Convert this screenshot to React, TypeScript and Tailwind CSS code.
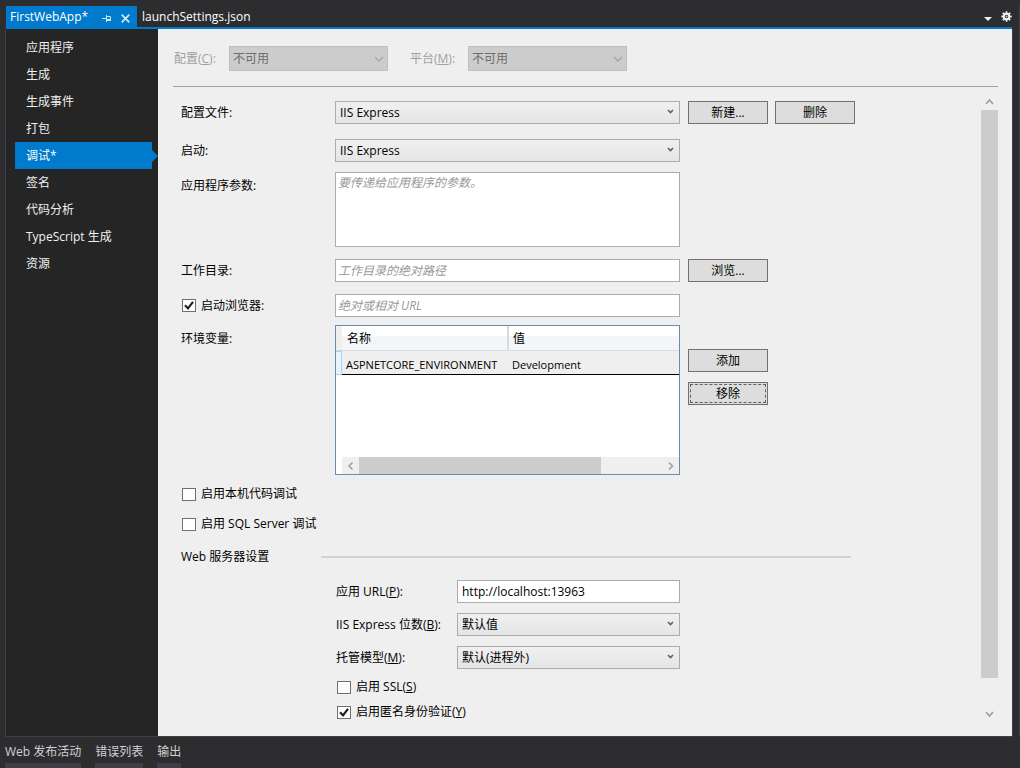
import { useId, useState } from "react";
import type { ReactNode } from "react";

const pages = ["应用程序", "生成", "生成事件", "打包", "调试*", "签名", "代码分析", "TypeScript 生成", "资源"];
const panels = ["Web 发布活动", "错误列表", "输出"];
const teeth = [0, 45, 90, 135, 180, 225, 270, 315];

function Chevron({ className, d, w = 2 }: { className: string; d: string; w?: number }) {
  return (
    <svg className={className} viewBox="0 0 10 10" fill="none" stroke="currentColor" strokeWidth={w} aria-hidden="true">
      <path d={d} />
    </svg>
  );
}

function Combo({ id, value, disabled = false }: { id: string; value: string; disabled?: boolean }) {
  return (
    <div className="relative min-w-0 flex-1">
      <select
        id={id}
        disabled={disabled}
        defaultValue={value}
        className={
          disabled
            ? "block h-[25px] w-full appearance-none border border-[#bfbfbf] bg-[#cccccc] px-[3px] text-[#6d6d6d] opacity-100"
            : "block h-[23px] w-full appearance-none border border-[#acacac] bg-linear-to-b from-[#f0f0f0] to-[#e5e5e5] px-1 text-black"
        }
      >
        <option>{value}</option>
      </select>
      {disabled ? (
        <Chevron className="pointer-events-none absolute top-2 right-1 h-[10px] w-[10px] text-[#a5a5a5]" d="M1 3l4 4 4-4" w={1.3} />
      ) : (
        <Chevron className="pointer-events-none absolute top-[5px] right-1 h-[10px] w-[10px] text-[#606060]" d="M2 4l2.5 2.5L7 4" w={1.6} />
      )}
    </div>
  );
}

function Check({ checked = false, children }: { checked?: boolean; children: ReactNode }) {
  const id = useId();
  return (
    <div className="flex items-center gap-[5px] pl-px">
      <span className="relative flex">
        <input
          id={id}
          type="checkbox"
          defaultChecked={checked}
          className="peer h-[13px] w-[14px] appearance-none border border-[#707070] bg-white"
        />
        <svg
          className="pointer-events-none absolute inset-0 hidden h-[13px] w-[14px] text-[#212121] peer-checked:block"
          viewBox="0 0 14 13"
          fill="none"
          stroke="currentColor"
          strokeWidth="2.2"
          aria-hidden="true"
        >
          <path d="M3 6.2l3 3.2 5-6.6" />
        </svg>
      </span>
      <label htmlFor={id}>{children}</label>
    </div>
  );
}

function Push({ children, focused = false }: { children: ReactNode; focused?: boolean }) {
  return (
    <button type="button" className="flex h-[23px] w-20 border border-[#707070] bg-[#dddddd] p-px text-black">
      <span
        className={
          focused
            ? "flex flex-1 items-center justify-center self-stretch border border-dashed border-[#606060]"
            : "flex flex-1 items-center justify-center self-stretch"
        }
      >
        {children}
      </span>
    </button>
  );
}

const box = "block w-full border border-[#acacac] bg-white text-black placeholder:text-[#999999] placeholder:italic";

export default function App() {
  const [page, setPage] = useState("调试*");
  return (
    <div className="flex min-h-screen flex-col bg-[#2d2d30] pt-[6px] font-['Open_Sans','Noto_Sans_CJK_SC',sans-serif] text-xs leading-4 text-black">
      <div className="flex flex-1 flex-col border-r border-[#3f3f46] pr-[6px] pl-[5px]">
        <header className="flex h-[21px] items-center pl-px text-white">
          <div className="flex h-full w-[131px] items-center bg-[#007acc] pl-1">
            <a href="#app" className="flex-1 whitespace-nowrap">FirstWebApp*</a>
            <button type="button" aria-label="固定" className="mt-1 mr-[10px]">
              <svg className="h-[9px] w-[9px]" viewBox="0 0 9 9" fill="none" stroke="#d0e6f5" aria-hidden="true">
                <path d="M0 4.5h4M4.5 1v7M4.5 2.5h4V6" />
                <path d="M4 6h5" strokeWidth="2" />
              </svg>
            </button>
            <button type="button" aria-label="关闭" className="mt-1 mr-[7px]">
              <svg className="h-[9px] w-[9px]" viewBox="0 0 9 9" fill="none" stroke="#d0e6f5" strokeWidth="1.7" aria-hidden="true">
                <path d="M0.7 0.7l7.6 7.6M8.3 0.7L0.7 8.3" />
              </svg>
            </button>
          </div>
          <a href="#launch" className="flex-1 pl-[5px]">launchSettings.json</a>
          <button type="button" aria-label="窗口列表" className="mt-1 mr-[9px]">
            <svg className="h-1 w-2" viewBox="0 0 8 4" fill="#f1f1f1" aria-hidden="true">
              <path d="M0 0h8L4 4z" />
            </svg>
          </button>
          <button type="button" aria-label="选项" className="mr-px">
            <svg className="h-[11px] w-[11px]" viewBox="0 0 11 11" fill="none" stroke="#f1f1f1" aria-hidden="true">
              <circle cx="5.5" cy="5.5" r="2.8" strokeWidth="2" />
              <circle cx="5.5" cy="5.5" r="0.6" strokeWidth="0.8" />
              {teeth.map((a) => (
                <path key={a} d="M5.5 0.3v2" strokeWidth="1.8" transform={`rotate(${a} 5.5 5.5)`} />
              ))}
            </svg>
          </button>
        </header>

        <div className="mx-px h-[2px] bg-[#007acc]" />

        <div className="flex flex-1 border border-t-0 border-[#3f3f46]">
          <nav className="flex w-[152px] shrink-0 flex-col bg-[#252526] pt-[5px] pl-[9px] text-[#f1f1f1]">
            {pages.map((p) => (
              <button
                key={p}
                type="button"
                onClick={() => setPage(p)}
                className="flex h-[27px] items-center text-left"
              >
                <span className={p === page ? "flex h-full flex-1 items-center bg-[#007acc] pl-[11px] text-white" : "flex-1 pl-[11px]"}>
                  {p}
                </span>
                <svg className="h-3 w-[6px]" viewBox="0 0 6 12" fill={p === page ? "#007acc" : "none"} aria-hidden="true">
                  <path d="M0 0l6 6-6 6z" />
                </svg>
              </button>
            ))}
          </nav>

          <main className="flex min-w-0 flex-1 flex-col bg-[#efefef] pr-[14px] pl-[15px]">
            <div className="flex items-center border-b border-[#a0a0a0] pt-[17px] pb-[15px] pl-px text-[#a0a0a0]">
              <label htmlFor="config" className="w-[55px] shrink-0 whitespace-nowrap">配置(<u>C</u>):</label>
              <div className="flex w-[159px]"><Combo id="config" value="不可用" disabled /></div>
              <label htmlFor="platform" className="ml-[22px] w-[58px] shrink-0 whitespace-nowrap">平台(<u>M</u>):</label>
              <div className="flex w-[159px]"><Combo id="platform" value="不可用" disabled /></div>
            </div>

            <div className="flex flex-1">
              <form className="min-w-0 max-w-[682px] flex-1 pt-[14px] pl-2" onSubmit={(e) => e.preventDefault()}>
                <div className="flex">
                  <label htmlFor="profile" className="w-[154px] shrink-0 self-center">配置文件:</label>
                  <Combo id="profile" value="IIS Express" />
                  <div className="ml-2 flex w-[167px] gap-[7px]"><Push>新建...</Push><Push>删除</Push></div>
                </div>
                <div className="mt-[15px] flex">
                  <label htmlFor="launch" className="w-[154px] shrink-0 self-center">启动:</label>
                  <Combo id="launch" value="IIS Express" />
                  <div className="ml-2 w-[167px]" />
                </div>
                <div className="mt-[10px] flex">
                  <label htmlFor="args" className="w-[154px] shrink-0 pt-[6px]">应用程序参数:</label>
                  <div className="flex-1">
                    <textarea id="args" placeholder="要传递给应用程序的参数。" className={`${box} h-[75px] resize-none p-[2px]`} />
                  </div>
                  <div className="ml-2 w-[167px]" />
                </div>
                <div className="mt-3 flex">
                  <label htmlFor="cwd" className="w-[154px] shrink-0 self-center">工作目录:</label>
                  <div className="flex-1"><input id="cwd" type="text" placeholder="工作目录的绝对路径" className={`${box} h-[23px] px-[2px]`} /></div>
                  <div className="ml-2 w-[167px]"><Push>浏览...</Push></div>
                </div>
                <div className="mt-3 flex">
                  <div className="flex w-[154px] shrink-0 items-center"><Check checked>启动浏览器:</Check></div>
                  <div className="flex-1"><input aria-label="启动 URL" type="text" placeholder="绝对或相对 URL" className={`${box} h-[23px] px-[2px]`} /></div>
                  <div className="ml-2 w-[167px]" />
                </div>
                <div className="mt-2 flex">
                  <span id="env" className="w-[154px] shrink-0 pt-[6px]">环境变量:</span>
                  <div className="flex h-[150px] min-w-0 flex-1 flex-col justify-between border border-[#688caf] bg-white">
                    <table aria-labelledby="env" className="w-full table-fixed border-separate border-spacing-0 text-left">
                      <thead>
                        <tr className="h-[25px]">
                          <th className="w-[6px] border-b border-[#d5d5d5] bg-[#efefef] p-0" />
                          <th className="w-[167px] border-r-2 border-b border-[#d9dbde] bg-linear-to-b from-white from-40% to-[#f3f5f8] to-45% p-0 pt-px pl-[5px] font-normal">名称</th>
                          <th className="border-b border-[#d9dbde] bg-linear-to-b from-white from-40% to-[#f3f5f8] to-45% p-0 pt-px pl-1 font-normal">值</th>
                        </tr>
                      </thead>
                      <tbody className="text-[11px]">
                        <tr className="h-6">
                          <td className="border border-l-0 border-[#99d9f2] bg-[#e8f5fb] p-0" />
                          <td className="border-b border-black bg-[#efefef] p-0 pt-1 pl-1 whitespace-nowrap">ASPNETCORE_ENVIRONMENT</td>
                          <td className="border-b border-black bg-[#efefef] p-0 pt-1 pl-[3px]">Development</td>
                        </tr>
                      </tbody>
                    </table>
                    <div className="ml-[6px] flex h-[17px] bg-[#efefef] text-[#a0a0a0]">
                      <button type="button" aria-label="向左滚动" className="flex w-[17px] items-center justify-center">
                        <Chevron className="h-[10px] w-[10px]" d="M6.5 1.5L3 5l3.5 3.5" w={1.6} />
                      </button>
                      <div className="flex-1"><div className="h-full w-4/5 bg-[#cccccc]" /></div>
                      <button type="button" aria-label="向右滚动" className="flex w-[17px] items-center justify-center">
                        <Chevron className="h-[10px] w-[10px]" d="M3 1.5L6.5 5L3 8.5" w={1.6} />
                      </button>
                    </div>
                  </div>
                  <div className="ml-2 flex w-[167px] flex-col gap-[10px] pt-6"><Push>添加</Push><Push focused>移除</Push></div>
                </div>

                <div className="mt-[11px]"><Check>启用本机代码调试</Check></div>
                <div className="mt-[14px]"><Check>启用 SQL Server 调试</Check></div>

                <div className="mt-[17px] flex items-center">
                  <h2 className="w-[140px] shrink-0">Web 服务器设置</h2>
                  <div className="mr-1 h-[2px] flex-1 bg-[#d3d3d3]" />
                </div>

                <div className="mt-[15px] mr-[175px] ml-[155px] flex flex-col gap-[10px]">
                  <div className="flex items-center">
                    <label htmlFor="url" className="w-[121px] shrink-0 whitespace-nowrap">应用 URL(<u>P</u>):</label>
                    <div className="flex-1"><input id="url" type="text" defaultValue="http://localhost:13963" className={`${box} h-[23px] px-1`} /></div>
                  </div>
                  <div className="flex items-center">
                    <label htmlFor="bits" className="w-[121px] shrink-0 whitespace-nowrap">IIS Express 位数(<u>B</u>):</label>
                    <Combo id="bits" value="默认值" />
                  </div>
                  <div className="flex items-center">
                    <label htmlFor="hosting" className="w-[121px] shrink-0 whitespace-nowrap">托管模型(<u>M</u>):</label>
                    <Combo id="hosting" value="默认(进程外)" />
                  </div>
                  <div className="flex flex-col gap-[9px]">
                    <Check>启用 SSL(<u>S</u>)</Check>
                    <Check checked>启用匿名身份验证(<u>Y</u>)</Check>
                  </div>
                </div>
              </form>

              <div className="mt-[6px] mb-[14px] ml-auto flex w-[17px] flex-col text-[#a0a0a0]">
                <button type="button" aria-label="向上滚动" className="flex h-[17px] items-center justify-center">
                  <Chevron className="h-[10px] w-[10px]" d="M1 7l3.5-4L8 7" w={1.6} />
                </button>
                <div className="flex-1"><div className="h-[95.5%] bg-[#cccccc]" /></div>
                <button type="button" aria-label="向下滚动" className="flex h-[17px] items-center justify-center">
                  <Chevron className="h-[10px] w-[10px]" d="M1 3l3.5 4L8 3" w={1.6} />
                </button>
              </div>
            </div>
          </main>
        </div>
      </div>

      <footer className="flex h-[31px] shrink-0 gap-[14px] pl-[5px] text-[#d0d0d0]">
        {panels.map((p) => (
          <button key={p} type="button" className="border-b-[5px] border-[#3f3f46] pt-1 whitespace-nowrap">
            {p}
          </button>
        ))}
      </footer>
    </div>
  );
}
